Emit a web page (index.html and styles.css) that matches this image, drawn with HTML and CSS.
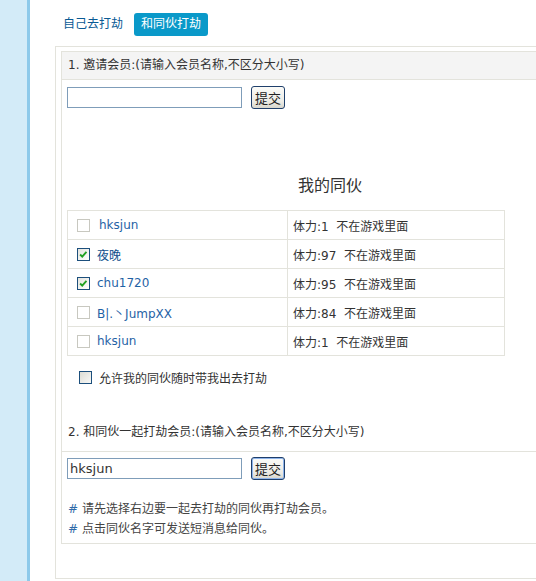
FILE: index.html
```html
<!DOCTYPE html>
<html>
<head>
<meta charset="utf-8">
<link rel="stylesheet" href="styles.css">
</head>
<body>
<div class="page">
  <div class="sidebar"></div>
  <div class="main">
    <div class="tabs">
      <a class="tab">自己去打劫</a>
      <a class="tab active">和同伙打劫</a>
    </div>
    <div class="outer">
      <div class="inner">
        <div class="head">1. 邀请会员:(请输入会员名称,不区分大小写)</div>
        <div class="form-row">
          <input class="txt" type="text" value="">
          <button class="btn">提交</button>
        </div>
        <div class="title">我的同伙</div>
        <table class="mates">
          <tr>
            <td class="c1"><span class="cb"></span><a class="name first">hksjun</a></td>
            <td class="c2">体力:1&nbsp; 不在游戏里面</td>
          </tr>
          <tr>
            <td class="c1"><span class="cb on"><svg viewBox="0 0 13 13" width="11" height="11"><path d="M2.5 6.5 L5 9 L10 3.5" fill="none" stroke="#22a022" stroke-width="2.2"/></svg></span><a class="name dark">夜晚</a></td>
            <td class="c2">体力:97&nbsp; 不在游戏里面</td>
          </tr>
          <tr>
            <td class="c1"><span class="cb on"><svg viewBox="0 0 13 13" width="11" height="11"><path d="M2.5 6.5 L5 9 L10 3.5" fill="none" stroke="#22a022" stroke-width="2.2"/></svg></span><a class="name">chu1720</a></td>
            <td class="c2">体力:95&nbsp; 不在游戏里面</td>
          </tr>
          <tr>
            <td class="c1"><span class="cb"></span><a class="name">B|.丶JumpXX</a></td>
            <td class="c2">体力:84&nbsp; 不在游戏里面</td>
          </tr>
          <tr>
            <td class="c1"><span class="cb"></span><a class="name">hksjun</a></td>
            <td class="c2">体力:1&nbsp; 不在游戏里面</td>
          </tr>
        </table>
        <div class="allow">
          <span class="cb big"></span>
          <span>允许我的同伙随时带我出去打劫</span>
        </div>
        <div class="head2">2. 和同伙一起打劫会员:(请输入会员名称,不区分大小写)</div>
        <div class="form-row r2">
          <input class="txt" type="text" value="hksjun">
          <button class="btn focus">提交</button>
        </div>
        <div class="notes">
          <p><span class="hash">#</span> 请先选择右边要一起去打劫的同伙再打劫会员。</p>
          <p><span class="hash">#</span> 点击同伙名字可发送短消息给同伙。</p>
        </div>
      </div>
    </div>
  </div>
</div>
</body>
</html>
```

FILE: styles.css
```css
html, body {
  margin: 0;
  padding: 0;
  overflow: hidden;
  background: #fff;
}
body {
  font-family: "DejaVu Sans", "Noto Sans CJK SC", sans-serif;
  font-size: 12px;
  color: #333;
}
.page {
  display: flex;
  height: 581px;
  overflow: hidden;
}
.sidebar {
  width: 27px;
  flex: none;
  background: #d3ebf8;
  border-right: 3px solid #8dc9ea;
}
.main {
  flex: 1;
  min-width: 0;
  overflow: hidden;
  padding-top: 13px;
  padding-left: 25px;
}
.tabs {
  display: flex;
  gap: 4px;
  margin-left: 1px;
  height: 23px;
}
.tab {
  display: block;
  height: 23px;
  line-height: 23px;
  padding: 0 7px;
  color: #0a5a94;
  font-size: 12px;
  border-radius: 3px;
}
.tab.active {
  background: #0a99c9;
  color: #fff;
}
.outer {
  margin-top: 10px;
  width: 560px;
  border: 1px solid #e3e3dc;
  padding: 4px 0 34px 5px;
}
.inner {
  width: 536px;
  border: 1px solid #e3e3dc;
  padding-bottom: 4px;
}
.head {
  height: 27px;
  line-height: 27px;
  background: #f4f4f4;
  border-bottom: 1px solid #e3e3dc;
  padding-left: 6px;
}
.form-row {
  display: flex;
  align-items: center;
  padding: 6px 5px 0;
  height: 23px;
}
.txt {
  box-sizing: border-box;
  width: 175px;
  height: 21px;
  margin: 0;
  border: 1px solid #7f9db9;
  padding: 0 2px;
  font-family: "DejaVu Sans", "Noto Sans CJK SC", sans-serif;
  font-size: 13px;
  color: #333;
  outline: none;
}
.btn {
  box-sizing: border-box;
  margin: 0 0 0 9px;
  width: 34px;
  height: 23px;
  padding: 0;
  border: 1px solid #1f3f6b;
  border-radius: 3px;
  background: linear-gradient(#fbfbf8, #ecebe5 70%, #d8d6cc);
  font-family: "Noto Sans CJK SC", sans-serif;
  font-size: 13px;
  color: #222;
}
.btn.focus {
  box-shadow: inset 0 0 0 1px #8fb4ea;
}
.title {
  margin-top: 65px;
  text-align: center;
  font-size: 16px;
  line-height: 20px;
  font-family: "Noto Sans CJK SC", sans-serif;
  color: #333;
}
.mates {
  margin: 16px 0 0 5px;
  border-collapse: collapse;
  width: 438px;
}
.mates td {
  border: 1px solid #e3e3dc;
  height: 28px;
  padding: 0;
}
.c1 {
  width: 210px;
  padding-left: 9px !important;
}
.c1 .cb {
  vertical-align: middle;
}
.c2 {
  padding-left: 5px !important;
}
.name {
  color: #1f62a5;
  margin-left: 7px;
  vertical-align: middle;
}
.name.first {
  margin-left: 9px;
}
.name.dark {
  color: #0d4d8b;
}
.cb {
  box-sizing: border-box;
  display: inline-flex;
  align-items: center;
  justify-content: center;
  width: 13px;
  height: 13px;
  border: 1px solid #c8c8c0;
  background: #fff;
}
.cb.on {
  border-color: #1c4f7c;
  background: linear-gradient(135deg, #e4e4de, #fff);
}
.cb.big {
  border-color: #1c4f7c;
  background: linear-gradient(135deg, #dcdcd4, #f8f8f6);
}
.allow {
  display: flex;
  align-items: center;
  gap: 7px;
  margin: 15px 0 0 17px;
  height: 13px;
}
.head2 {
  margin-top: 35px;
  height: 27px;
  line-height: 27px;
  padding: 0 0 5px 6px;
  border-bottom: 1px solid #e3e3dc;
}
.r2 {
  padding-top: 5px;
}
.notes {
  margin-top: 19px;
  padding-left: 6px;
}
.notes p {
  margin: 0;
  line-height: 20px;
  color: #444;
}
.hash {
  color: #2f6aa8;
}
```
